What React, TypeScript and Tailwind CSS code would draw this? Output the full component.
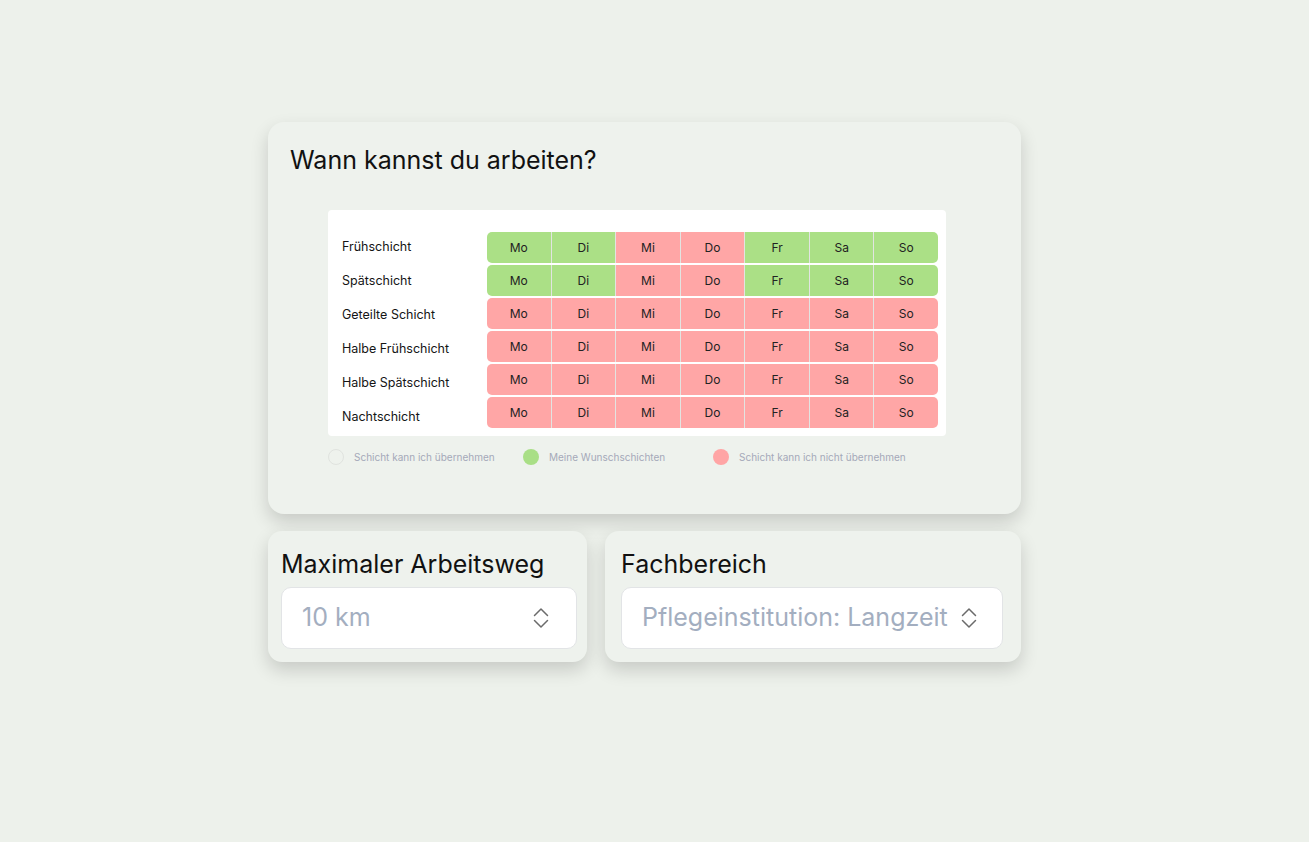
import React from "react";

const shifts = [
  "Frühschicht",
  "Spätschicht",
  "Geteilte Schicht",
  "Halbe Frühschicht",
  "Halbe Spätschicht",
  "Nachtschicht",
];
const days = ["Mo", "Di", "Mi", "Do", "Fr", "Sa", "So"];
const green: boolean[][] = [
  [true, true, false, false, true, true, true],
  [true, true, false, false, true, true, true],
  [false, false, false, false, false, false, false],
  [false, false, false, false, false, false, false],
  [false, false, false, false, false, false, false],
  [false, false, false, false, false, false, false],
];

function UpDown() {
  return (
    <svg width="18" height="24" viewBox="0 0 18 24" fill="none" stroke="#6b6b6b" strokeWidth="1.5" strokeLinecap="round" strokeLinejoin="round">
      <path d="M2.5 9.5 L9 3 L15.5 9.5" />
      <path d="M2.5 14.5 L9 21 L15.5 14.5" />
    </svg>
  );
}

export default function App() {
  return (
    <div
      className="min-h-[842px] w-full bg-[#edf1eb] pl-[268px] pt-[122px]"
      style={{ fontFamily: "Inter, 'Noto Sans', sans-serif" }}
    >
      <div className="w-[753px] h-[392px] rounded-[16px] bg-[#eef2ed] shadow-[0_8px_18px_rgba(0,0,0,0.16)] pl-[22px] pt-[22px] box-border">
        <h1 className="text-[25px] leading-[32px] text-[#111111] font-normal">
          Wann kannst du arbeiten?
        </h1>
        <div className="ml-[38px] mt-[34px] w-[618px] rounded-[4px] bg-white flex items-start pl-[14px] pt-[22px] pr-[8px] pb-[8px] box-border">
          <div className="w-[145px] shrink-0 flex flex-col -mt-[2px] -mb-[6px]">
            {shifts.map((s) => (
              <div key={s} className="h-[34px] shrink-0 flex items-center text-[12.5px] text-[#151515]">
                {s}
              </div>
            ))}
          </div>
          <div className="flex-1 flex flex-col gap-[2px]">
            {shifts.map((s, r) => (
              <div key={s} className="h-[31px] flex rounded-[5px] overflow-hidden">
                {days.map((d, c) => (
                  <div
                    key={d}
                    className={`flex-1 flex items-center justify-center text-[12px] text-[#222222] ${
                      c > 0 ? "border-l border-[#e2e4e1]" : ""
                    } ${green[r][c] ? "bg-[#abe086]" : "bg-[#ffa6a6]"}`}
                  >
                    {d}
                  </div>
                ))}
              </div>
            ))}
          </div>
        </div>
        <div className="ml-[38px] mt-[13px] flex items-center h-[16px] text-[10px] text-[#a5a9b9]">
          <div className="w-[195px] flex items-center gap-[10px]">
            <span className="w-[16px] h-[16px] rounded-full border border-[#e0e3df]" />
            <span>Schicht kann ich übernehmen</span>
          </div>
          <div className="w-[190px] flex items-center gap-[10px]">
            <span className="w-[16px] h-[16px] rounded-full bg-[#a9df86]" />
            <span>Meine Wunschschichten</span>
          </div>
          <div className="flex items-center gap-[10px]">
            <span className="w-[16px] h-[16px] rounded-full bg-[#ffa5a5]" />
            <span>Schicht kann ich nicht übernehmen</span>
          </div>
        </div>
      </div>

      <div className="flex gap-[18px] mt-[17px]">
        <div className="w-[319px] h-[131px] rounded-[14px] bg-[#eef2ed] shadow-[0_8px_18px_rgba(0,0,0,0.16)] pl-[13px] pr-[10px] pt-[17px] box-border">
          <div className="text-[25px] leading-[32px] text-[#111111]">Maximaler Arbeitsweg</div>
          <div className="mt-[7px] h-[62px] rounded-[10px] bg-white border border-[#e2e4e6] flex items-center justify-between pl-[20px] pr-[26px]">
            <span className="text-[25px] text-[#a3aec0]">10 km</span>
            <UpDown />
          </div>
        </div>
        <div className="w-[416px] h-[131px] rounded-[14px] bg-[#eef2ed] shadow-[0_8px_18px_rgba(0,0,0,0.16)] pl-[16px] pr-[18px] pt-[17px] box-border">
          <div className="text-[25px] leading-[32px] text-[#111111]">Fachbereich</div>
          <div className="mt-[7px] h-[62px] rounded-[10px] bg-white border border-[#e2e4e6] flex items-center pl-[20px] gap-[12px]">
            <span className="text-[25px] text-[#a3aec0] whitespace-nowrap">Pflegeinstitution: Langzeit</span>
            <UpDown />
          </div>
        </div>
      </div>
    </div>
  );
}
